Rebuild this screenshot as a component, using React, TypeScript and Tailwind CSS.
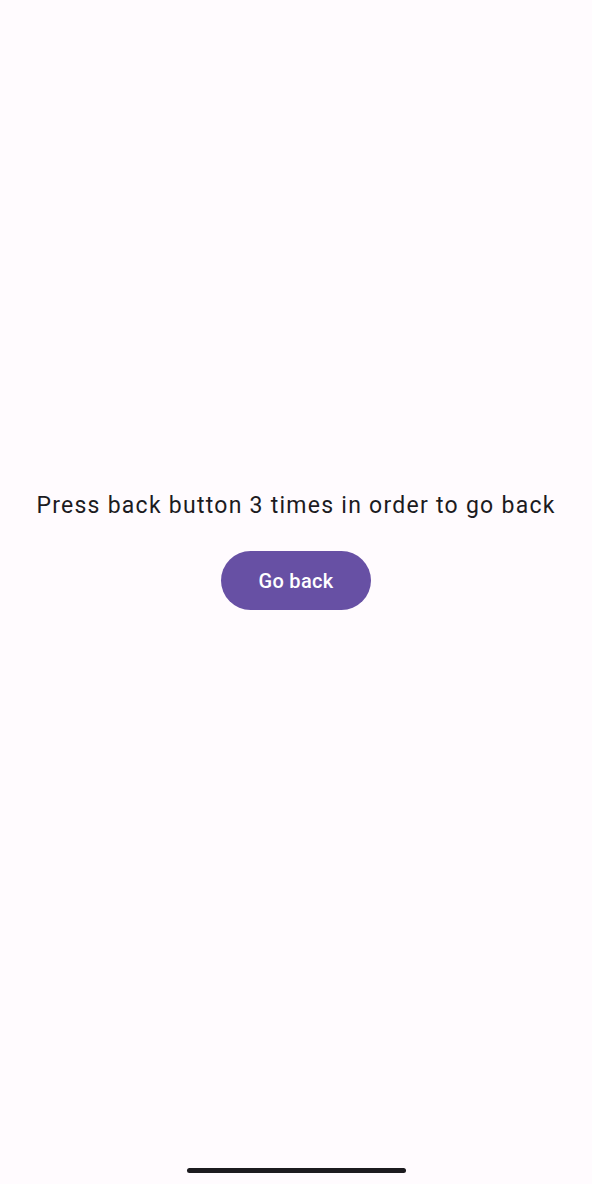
export default function App() {
  return (
    <div className="h-[1184px] w-full flex flex-col bg-[#fffbfe]" style={{ fontFamily: 'Roboto, sans-serif' }}>
      <div className="flex-1 flex flex-col items-center justify-center">
        <p className="text-[23px] leading-[28px] tracking-[1.26px] text-[#1c1b1f]">
          Press back button 3 times in order to go back
        </p>
        <button className="mt-[31px] h-[59px] w-[150px] rounded-full bg-[#6750a4] text-white text-[20px] tracking-[0.3px] font-medium">
          Go back
        </button>
      </div>
      <div className="h-[82px] flex justify-center">
        <div className="mt-[66px] h-[5px] w-[219px] rounded-full bg-[#1c1b1f]" />
      </div>
    </div>
  )
}
